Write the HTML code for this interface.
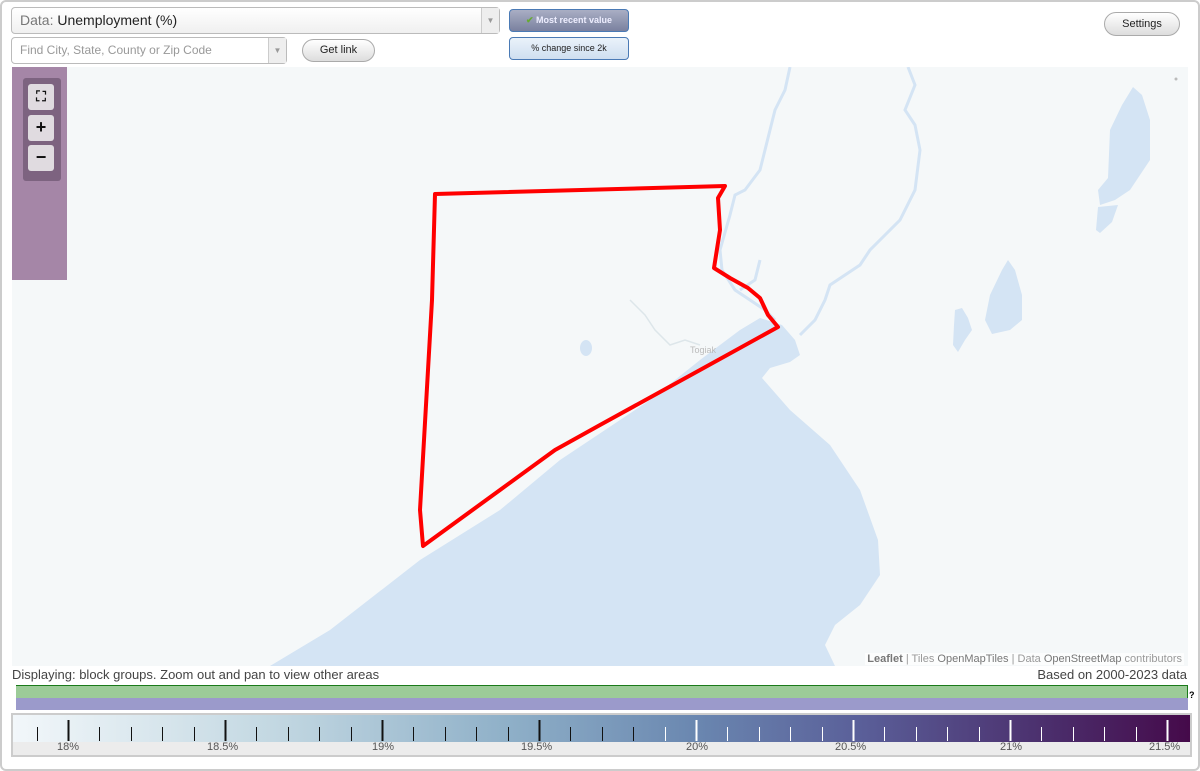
<!DOCTYPE html>
<html><head><meta charset="utf-8"><style>
*{box-sizing:border-box;margin:0;padding:0}
body{width:1200px;height:771px;background:#fff;font-family:"Liberation Sans",Arial,sans-serif;position:relative;overflow:hidden}
.frame{position:absolute;left:0;top:0;width:1200px;height:771px;border:2px solid #ccc;border-radius:6px}
.sel{position:absolute;left:11px;top:7px;width:489px;height:27px;border:1px solid #bbb;border-radius:4px;background:linear-gradient(#fff,#f0f0f0);font-size:14px;line-height:25px;padding-left:8px;color:#222}
.sel .l{color:#777}
.dd{position:absolute;right:0;top:0;width:18px;height:100%;border-left:1px solid #ccc;background:#eee;color:#999;font-size:8px;text-align:center}
.find{position:absolute;left:11px;top:37px;width:276px;height:27px;border:1px solid #bbb;border-radius:4px;background:#fff;font-size:12px;line-height:25px;padding-left:8px;color:#999}
.btn{position:absolute;border:1px solid #aaa;border-radius:12px;background:linear-gradient(#fff,#ddd);font-size:11px;text-align:center;color:#222}
.tg{position:absolute;left:509px;width:120px;height:23px;border:1px solid #4a7ab5;border-radius:4px;font-size:9px;text-align:center;line-height:21px}
#map{position:absolute;left:12px;top:67px;width:1176px;height:599px;background:#f5f8f9;overflow:hidden}
.zc{position:absolute;left:12px;top:67px;width:55px;height:213px;background:#a586a7}
.zi{position:absolute;left:11px;top:11px;width:38px;height:103px;background:#7d6380;border-radius:3px}
.zb{position:absolute;left:5px;width:26px;height:26px;background:#e0dbe0;border-radius:3px;font-weight:bold;font-size:18px;text-align:center;line-height:25px;color:#111}
</style></head><body>
<div class="frame"></div>
<div class="sel"><span class="l">Data:</span> Unemployment (%)<div class="dd">▼</div></div>
<div class="find">Find City, State, County or Zip Code<div class="dd" style="line-height:25px">▼</div></div>
<div class="btn" style="left:302px;top:39px;width:73px;height:23px;line-height:21px">Get link</div>
<div class="tg" style="top:9px;background:linear-gradient(#a9aec4,#7a819f);color:#eef;font-weight:bold"><span style="color:#6a3">✔</span> Most recent value</div>
<div class="tg" style="top:37px;background:linear-gradient(#eaf2fa,#cfdff0);color:#222">% change since 2k</div>
<div class="btn" style="left:1104px;top:12px;width:76px;height:24px;line-height:22px">Settings</div>
<div id="map">
<svg width="1176" height="599" viewBox="12 67 1176 599">
<g fill="#d4e4f4">
<path d="M270,666 L330,630 L420,560 L500,510 L560,460 L650,400 L700,360 L740,330 L760,318 L782,325 L795,340 L800,355 L790,362 L770,368 L762,378 L790,410 L830,445 L860,490 L878,540 L880,575 L860,605 L835,625 L825,645 L835,666Z"/>
<path d="M1133,87 L1142,95 L1150,120 L1150,160 L1130,190 L1115,200 L1100,205 L1098,190 L1108,178 L1110,130 L1122,105Z"/>
<path d="M1098,207 L1118,205 L1112,222 L1100,233 L1096,230Z"/>
<path d="M1008,260 L1015,270 L1022,295 L1022,320 L1010,330 L992,334 L985,320 L990,295 L1002,270Z"/>
<path d="M955,310 L962,308 L968,318 L972,330 L965,340 L958,352 L953,345 L954,325Z"/>
<ellipse cx="586" cy="348" rx="6" ry="8"/>
</g>
<g fill="none" stroke="#d4e4f4" stroke-width="3">
<path d="M790,67 L785,90 L775,110 L770,130 L765,150 L760,170 L745,190 L735,195 L730,215 L720,250 L722,270 L735,290 L750,300 L765,310 L775,320"/>
<path d="M908,67 L915,85 L905,110 L915,125 L920,150 L915,190 L900,220 L885,235 L870,250 L860,265 L845,275 L830,285 L825,300 L815,320 L800,335"/>
<path d="M760,260 L755,280 L740,290"/>
</g>
<g fill="none" stroke="#dde6ea" stroke-width="1.5"><path d="M630,300 L645,315 L655,330 L670,345 L685,340 L700,345"/></g>
<text x="690" y="353" font-size="9" fill="#bbb" font-family="Liberation Sans">Togiak</text>
<circle cx="1176" cy="79" r="1.5" fill="#bbb"/>
<path d="M435,194 L725,186 L718,198 L720,230 L714,268 L730,278 L748,288 L760,298 L768,315 L778,327 L700,370 L600,425 L555,450 L500,490 L423,546 L420,510 L432,300Z" fill="none" stroke="#f00" stroke-width="4" stroke-linejoin="round"/>
</svg>
<div style="position:absolute;right:4px;bottom:1px;font-size:11px;color:#999;background:rgba(255,255,255,.7);padding:0 2px"><b style="color:#777">Leaflet</b> | Tiles <span style="color:#777">OpenMapTiles</span> | Data <span style="color:#777">OpenStreetMap</span> contributors</div>
</div>
<div class="zc"><div class="zi">
<div class="zb" style="top:6px;font-size:14px">⛶</div>
<div class="zb" style="top:37px">+</div>
<div class="zb" style="top:67px">−</div>
</div></div>
<div style="position:absolute;left:12px;top:667px;font-size:13px;color:#444">Displaying: block groups. Zoom out and pan to view other areas</div>
<div style="position:absolute;right:13px;top:667px;font-size:13px;color:#444">Based on 2000-2023 data</div>
<div style="position:absolute;left:16px;top:685px;width:1172px;height:13px;background:#9ccb98;border-top:1px solid #1a7a1a;border-right:1px solid #1a7a1a"></div>
<div style="position:absolute;left:16px;top:698px;width:1172px;height:12px;background:#9b9acb"></div>
<div style="position:absolute;left:1189px;top:690px;font-size:9px;font-weight:bold">?</div>
<div style="position:absolute;left:11px;top:713px;width:1181px;height:44px;border:2px solid #ccc;background:#ececec">
<div style="position:absolute;left:0;top:0;right:0;height:27px;background:linear-gradient(90deg,#f2f7fa,#c3d8e2 22%,#8fb0c8 42%,#6a87b0 58%,#5a5f99 72%,#4b2e6c 88%,#450a4a)"></div>
<svg width="1177" height="27" style="position:absolute;left:0;top:0">
<g id="t"></g>
</svg>
</div>
<script>
var g=document.getElementById('t'),s='',st=31.4;
for(var i=1;i<38;i++){var x=Math.round(i*st-7.8)+0.5;if(x<2||x>1175)continue;var maj=(i%5==2);var c=x>650?'#fff':'#111';
s+='<line x1="'+x+'" x2="'+x+'" y1="'+(maj?5:12)+'" y2="26" stroke="'+c+'" stroke-width="'+(maj?2:1)+'"/>';}
g.innerHTML=s;
</script>
<div style="position:absolute;top:741px;left:0;width:1200px;font-size:11px;color:#555">
<span style="position:absolute;left:57px">18%</span><span style="position:absolute;left:207px">18.5%</span><span style="position:absolute;left:372px">19%</span><span style="position:absolute;left:521px">19.5%</span><span style="position:absolute;left:686px">20%</span><span style="position:absolute;left:835px">20.5%</span><span style="position:absolute;left:1000px">21%</span><span style="position:absolute;left:1149px">21.5%</span>
</div>
</body></html>
